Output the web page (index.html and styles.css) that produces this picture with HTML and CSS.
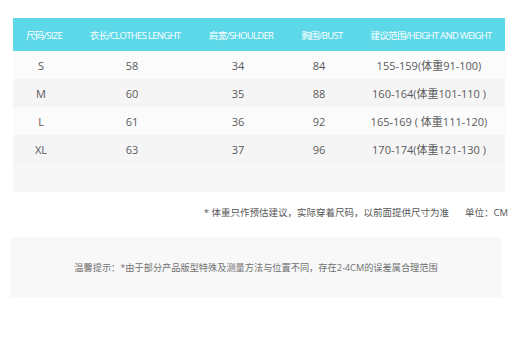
FILE: index.html
```html
<!DOCTYPE html>
<html lang="zh">
<head>
<meta charset="utf-8">
<title>尺码表</title>
<link rel="stylesheet" href="styles.css">
</head>
<body>
<div class="page">
  <div class="table">
    <div class="row head">
      <div class="c c1">尺码/SIZE</div>
      <div class="c c2">衣长/CLOTHES LENGHT</div>
      <div class="c c3">肩宽/SHOULDER</div>
      <div class="c c4">胸围/BUST</div>
      <div class="c c5">建议范围/HEIGHT AND WEIGHT</div>
    </div>
    <div class="row light">
      <div class="c c1">S</div><div class="c c2">58</div><div class="c c3">34</div><div class="c c4">84</div><div class="c c5">155-159(体重91-100)</div>
    </div>
    <div class="row grey">
      <div class="c c1">M</div><div class="c c2">60</div><div class="c c3">35</div><div class="c c4">88</div><div class="c c5">160-164(体重101-110 )</div>
    </div>
    <div class="row light">
      <div class="c c1">L</div><div class="c c2">61</div><div class="c c3">36</div><div class="c c4">92</div><div class="c c5">165-169 ( 体重111-120)</div>
    </div>
    <div class="row grey">
      <div class="c c1">XL</div><div class="c c2">63</div><div class="c c3">37</div><div class="c c4">96</div><div class="c c5">170-174(体重121-130 )</div>
    </div>
    <div class="row empty"></div>
  </div>
  <p class="note">* 体重只作预估建议，实际穿着尺码，以前面提供尺寸为准<span class="unit">单位：CM</span></p>
  <div class="tip">温馨提示：*由于部分产品版型特殊及测量方法与位置不同，存在2-4CM的误差属合理范围</div>
</div>
</body>
</html>
```
FILE: styles.css
```css
html, body {
  margin: 0;
  padding: 0;
  background: #ffffff;
}
body {
  font-family: "Open Sans", "Noto Sans CJK SC", sans-serif;
  color: #5a5a5a;
}
.page {
  padding-top: 18px;
}
.table {
  margin-left: 13px;
  width: 492px;
}
.row {
  display: grid;
  grid-template-columns: 62px 120px 92px 70px 148px;
  height: 28px;
  align-items: center;
}
.row.head {
  height: 33px;
  background: #5cd8e9;
  color: #ffffff;
  font-size: 9.5px;
  letter-spacing: -0.7px;
}
.row.light { background: #fbfbfc; }
.row.grey { background: #f5f5f6; }
.row.empty { height: 29px; background: #f7f7f8; }
.c {
  text-align: center;
  white-space: nowrap;
  overflow: visible;
}
.row:not(.head) .c {
  font-size: 11px;
  padding-right: 6px;
}
.row:not(.head) .c5 {
  padding-right: 4px;
}
.note {
  margin: 14px 0 0 0;
  padding-right: 12px;
  text-align: right;
  font-size: 9.5px;
  line-height: 14px;
  color: #555555;
  white-space: nowrap;
}
.unit {
  margin-left: 16px;
}
.tip {
  margin: 17px 0 0 10px;
  width: 492px;
  height: 60px;
  background: #f8f8f8;
  display: flex;
  align-items: center;
  justify-content: center;
  font-size: 9.2px;
  color: #707070;
  white-space: nowrap;
}
```
